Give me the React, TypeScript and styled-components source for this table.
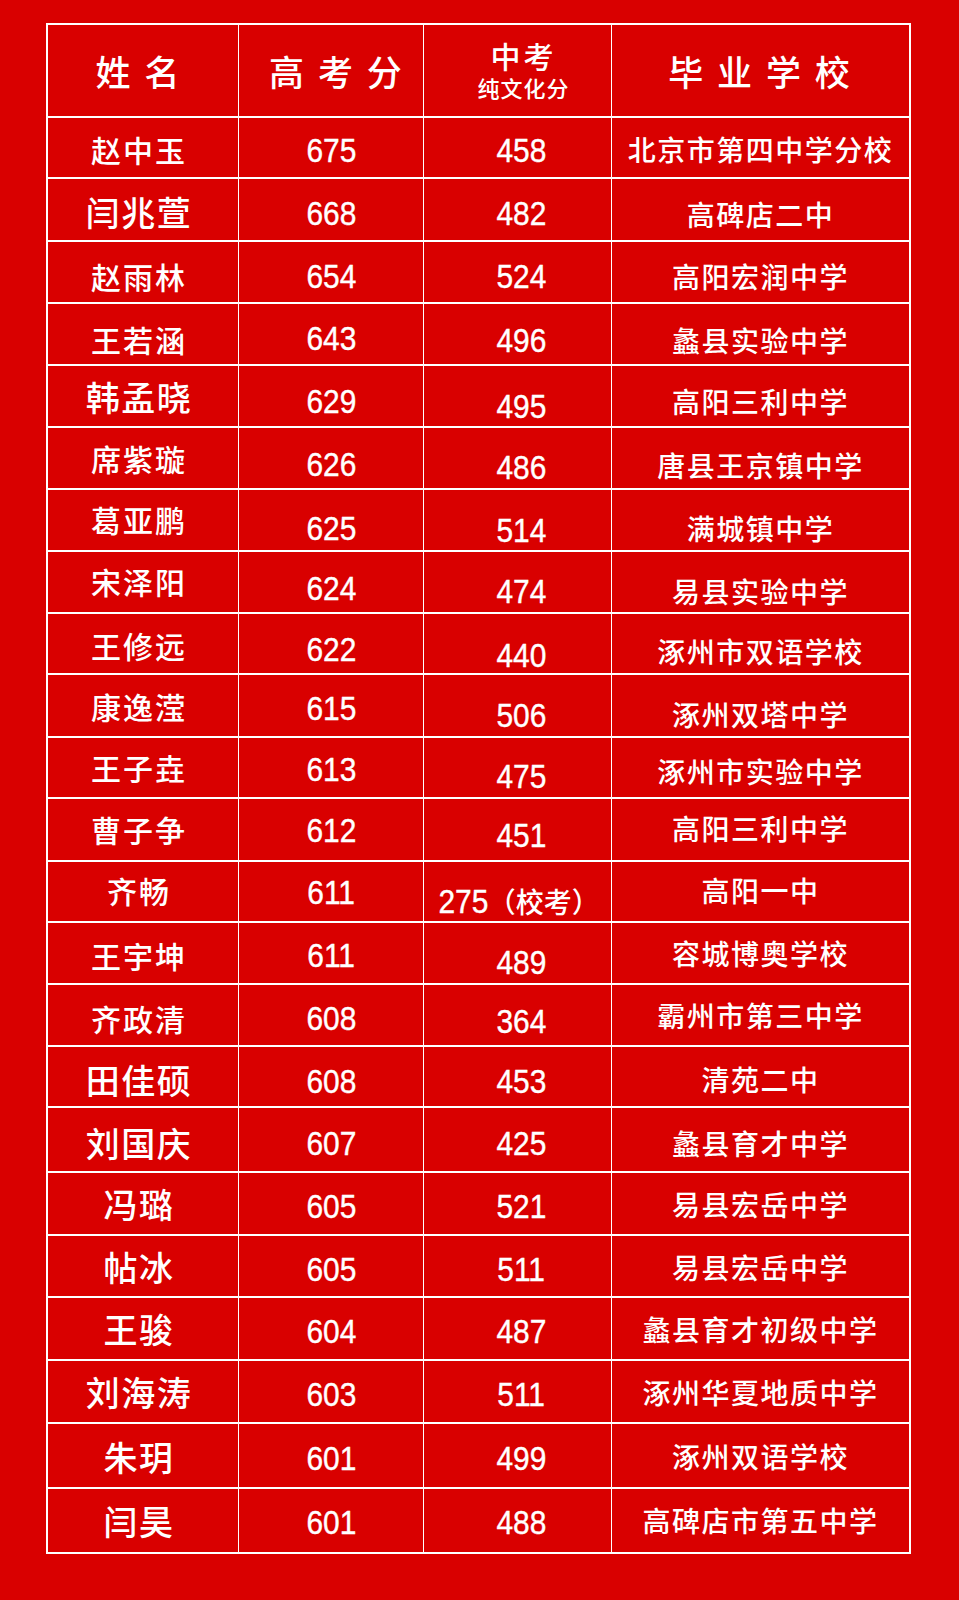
import React from "react";
import styled, { createGlobalStyle } from "styled-components";

const RED = "#d90000";

const GlobalStyle = createGlobalStyle`
  html, body { margin: 0; padding: 0; background: ${RED}; }
  body { font-family: "Noto Sans CJK SC", sans-serif; color: #fff; }
`;

const Page = styled.div`
  width: 959px;
  height: 1600px;
  box-sizing: border-box;
  padding: 23px 0 0 46px;
  background: ${RED};
`;

const Table = styled.div`
  width: 865px;
  box-sizing: border-box;
  border: 2px solid #ffffff;
  display: flex;
  flex-direction: column;
`;

const Row = styled.div<{ $h: number; $head?: boolean }>`
  display: grid;
  grid-template-columns: 190px 185px 188px 1fr;
  height: ${(p) => p.$h}px;
  box-sizing: border-box;
  border-top: ${(p) => (p.$head ? "none" : "2px solid #ffffff")};
`;

const Cell = styled.div<{ $first?: boolean; $dx?: number; $dy?: number }>`
  display: flex;
  flex-direction: column;
  align-items: center;
  justify-content: center;
  box-sizing: border-box;
  border-left: ${(p) => (p.$first ? "none" : "1px solid #ffffff")};
  padding-left: ${(p) => Math.max(0, 2 * (p.$dx ?? 0))}px;
  padding-right: ${(p) => Math.max(0, -2 * (p.$dx ?? 0))}px;
  padding-top: ${(p) => Math.max(0, 2 * (p.$dy ?? 0))}px;
  padding-bottom: ${(p) => Math.max(0, -2 * (p.$dy ?? 0))}px;
  white-space: nowrap;
  overflow: visible;
`;

const HeadText = styled.span`
  font-family: "Noto Sans CJK SC", sans-serif;
  font-weight: 500;
  font-size: 35px;
  line-height: 40px;
  letter-spacing: 3px;
  white-space: pre;
`;

const HeadStack = styled.span`
  display: flex;
  flex-direction: column;
  align-items: center;
  gap: 2px;
`;

const HeadTitle = styled.span`
  font-family: "Liberation Sans", "Noto Sans CJK SC", sans-serif;
  font-weight: 500;
  font-size: 30px;
  line-height: 34px;
  letter-spacing: 3px;
`;

const HeadSub = styled.span`
  font-family: "Liberation Sans", "Noto Sans CJK SC", sans-serif;
  font-weight: 500;
  font-size: 22px;
  line-height: 26px;
  letter-spacing: 1px;
`;

const NameText = styled.span<{ $big?: boolean }>`
  font-family: "Noto Sans CJK SC", sans-serif;
  font-weight: 500;
  font-size: ${(p) => (p.$big ? 34 : 30)}px;
  line-height: 1.2;
  letter-spacing: ${(p) => (p.$big ? 1.5 : 2)}px;
`;

const NumLine = styled.span`
  display: flex;
  align-items: center;
  line-height: 1.2;
`;

const Digits = styled.span`
  display: inline-block;
  font-family: "Liberation Sans", Arial, sans-serif;
  font-size: 34px;
  line-height: 1.2;
  transform: scaleX(0.88);
  -webkit-text-stroke: 0.4px #ffffff;
`;

const Paren = styled.span`
  font-family: "Noto Sans CJK SC", sans-serif;
  font-weight: 500;
  font-size: 28px;
  line-height: 1.2;
  margin-left: -4px;
`;

const SchoolText = styled.span`
  font-family: "Noto Sans CJK SC", sans-serif;
  font-weight: 500;
  font-size: 28px;
  line-height: 1.2;
  letter-spacing: 1.5px;
`;

type RowData = {
  name: string;
  big?: boolean;
  gk: string;
  zk: string;
  note?: string;
  school: string;
  h: number;
  dy: [number, number, number, number];
};

const rows: RowData[] = [
  { name: "赵中玉", gk: "675", zk: "458", school: "北京市第四中学分校", h: 61, dy: [3.5, 2.5, 2.5, 3.5] },
  { name: "闫兆萱", big: true, gk: "668", zk: "482", school: "高碑店二中", h: 63, dy: [4.5, 3.5, 3.5, 6.5] },
  { name: "赵雨林", gk: "654", zk: "524", school: "高阳宏润中学", h: 62, dy: [6, 4, 4, 6] },
  { name: "王若涵", gk: "643", zk: "496", school: "蠡县实验中学", h: 62, dy: [7, 4.5, 6, 8] },
  { name: "韩孟晓", big: true, gk: "629", zk: "495", school: "高阳三利中学", h: 62, dy: [3, 5, 10, 7] },
  { name: "席紫璇", gk: "626", zk: "486", school: "唐县王京镇中学", h: 62, dy: [2, 6, 9, 9] },
  { name: "葛亚鹏", gk: "625", zk: "514", school: "满城镇中学", h: 62, dy: [0, 8, 10, 10] },
  { name: "宋泽阳", gk: "624", zk: "474", school: "易县实验中学", h: 62, dy: [1, 6, 9, 11] },
  { name: "王修远", gk: "622", zk: "440", school: "涿州市双语学校", h: 61, dy: [1.5, 4.5, 10.5, 8.5] },
  { name: "康逸滢", gk: "615", zk: "506", school: "涿州双塔中学", h: 63, dy: [2.5, 2.5, 9.5, 10.5] },
  { name: "王子垚", gk: "613", zk: "475", school: "涿州市实验中学", h: 61, dy: [1.5, 1.5, 8.5, 5.5] },
  { name: "曹子争", gk: "612", zk: "451", school: "高阳三利中学", h: 63, dy: [1, 0.5, 5.5, 0.5] },
  { name: "齐畅", gk: "611", zk: "275", note: "（校考）", school: "高阳一中", h: 61, dy: [0, 0.5, 9.5, 0.5] },
  { name: "王宇坤", gk: "611", zk: "489", school: "容城博奥学校", h: 62, dy: [4, 2, 9, 2] },
  { name: "齐政清", gk: "608", zk: "364", school: "霸州市第三中学", h: 62, dy: [5, 3, 6, 2] },
  { name: "田佳硕", big: true, gk: "608", zk: "453", school: "清苑二中", h: 61, dy: [5.5, 4.5, 4.5, 4.5] },
  { name: "刘国庆", big: true, gk: "607", zk: "425", school: "蠡县育才中学", h: 65, dy: [5.5, 3.5, 3.5, 5.5] },
  { name: "冯璐", big: true, gk: "605", zk: "521", school: "易县宏岳中学", h: 63, dy: [3, 3, 3, 3] },
  { name: "帖冰", big: true, gk: "605", zk: "511", school: "易县宏岳中学", h: 62, dy: [3, 3, 3, 3] },
  { name: "王骏", big: true, gk: "604", zk: "487", school: "蠡县育才初级中学", h: 63, dy: [3, 3, 3, 3] },
  { name: "刘海涛", big: true, gk: "603", zk: "511", school: "涿州华夏地质中学", h: 63, dy: [3, 3, 3, 3] },
  { name: "朱玥", big: true, gk: "601", zk: "499", school: "涿州双语学校", h: 65, dy: [3.5, 2.5, 2.5, 2.5] },
  { name: "闫昊", big: true, gk: "601", zk: "488", school: "高碑店市第五中学", h: 65, dy: [2.5, 1.5, 1.5, 1.5] },
];

// Noto Sans CJK ideographs sit ~0.056em below the line-box centre
const cjk = (dy: number, size: number) => dy - 0.056 * size;

export default function App() {
  return (
    <>
      <GlobalStyle />
      <Page>
        <Table>
          <Row $h={91} $head>
            <Cell $first $dx={-4} $dy={0}>
              <HeadText>姓 名</HeadText>
            </Cell>
            <Cell $dx={6} $dy={0}>
              <HeadText>高 考 分</HeadText>
            </Cell>
            <Cell $dx={6} $dy={1}>
              <HeadStack>
                <HeadTitle>中考</HeadTitle>
                <HeadSub>纯文化分</HeadSub>
              </HeadStack>
            </Cell>
            <Cell $dy={0}>
              <HeadText>毕 业 学 校</HeadText>
            </Cell>
          </Row>
          {rows.map((r, i) => (
            <Row key={i} $h={r.h}>
              <Cell $first $dx={-4} $dy={cjk(r.dy[0], r.big ? 34 : 30)}>
                <NameText $big={r.big}>{r.name}</NameText>
              </Cell>
              <Cell $dy={r.dy[1]}>
                <NumLine>
                  <Digits>{r.gk}</Digits>
                </NumLine>
              </Cell>
              <Cell $dx={r.note ? 0 : 4} $dy={r.dy[2]}>
                <NumLine>
                  <Digits>{r.zk}</Digits>
                  {r.note ? <Paren>{r.note}</Paren> : null}
                </NumLine>
              </Cell>
              <Cell $dy={cjk(r.dy[3], 28)}>
                <SchoolText>{r.school}</SchoolText>
              </Cell>
            </Row>
          ))}
        </Table>
      </Page>
    </>
  );
}
